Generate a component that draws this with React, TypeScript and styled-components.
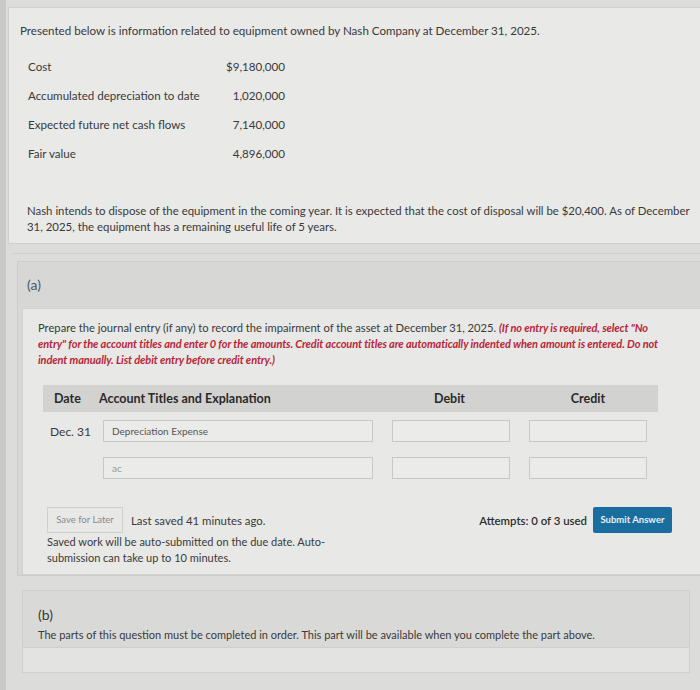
import React from "react";
import styled, { createGlobalStyle } from "styled-components";

const GlobalStyle = createGlobalStyle`
  html, body {
    margin: 0;
    padding: 0;
    background: #dcdcda;
  }
  body {
    font-family: Lato, "Open Sans", "Liberation Sans", sans-serif;
    color: #3a3a3a;
  }
`;

const Page = styled.div`
  width: 700px;
  height: 690px;
  overflow: hidden;
  padding: 7px 0 0 2px;
  box-sizing: border-box;
  border-left: 6px solid #c9c9c7;
`;

const StemBox = styled.div`
  background: #e9e9e7;
  border: 1px solid #d0d0ce;
  border-right: none;
  padding: 15px 0 0 4px;
  height: 237px;
  box-sizing: border-box;
`;

const Intro = styled.p`
  margin: 0 0 0 7px;
  font-size: 11.6px;
  line-height: 16px;
`;

const DataTable = styled.div`
  display: grid;
  grid-template-columns: 190px 67px;
  margin: 20px 0 0 15px;
  row-gap: 13px;
  font-size: 11.6px;
  line-height: 16px;
  white-space: nowrap;
`;

const Value = styled.span`
  text-align: right;
`;

const NashBox = styled.div`
  margin: 41px 0 0 0;
  padding: 0 0 18px 14px;
  border-bottom: 1px solid #cfcfcd;
  font-size: 11.4px;
  line-height: 16px;
`;

const PartSection = styled.section`
  margin: 17px 0 0 9px;
  background: #d7d7d5;
  border: 1px solid #cdcdcb;
  border-right: none;
`;

const PartLabel = styled.div`
  padding: 14px 0 14px 9px;
  font-size: 14px;
  line-height: 18px;
  color: #4b586a;
`;

const PartBody = styled.div`
  margin-left: 4px;
  background: #e8e8e6;
  border: 1px solid #d2d2d0;
  border-right: none;
  padding: 11px 0 14px 15px;
  height: 267px;
  box-sizing: border-box;
`;

const Instructions = styled.p`
  margin: 0;
  width: 634px;
  font-size: 11.2px;
  line-height: 16px;
`;

const Note = styled.em`
  color: #b8263a;
  font-weight: 700;
  font-size: 11px;
  letter-spacing: -0.1px;
`;

const Journal = styled.div`
  margin: 17px 0 0 5px;
  width: 615px;
`;

const HeaderRow = styled.div`
  display: grid;
  grid-template-columns: 56px 282px 137px 140px;
  height: 27px;
  align-items: center;
  background: #d2d2d0;
  font-size: 12.5px;
  font-weight: 700;
  color: #2a2a2a;
  margin-bottom: 8px;
`;

const HeadCell = styled.span<{ $center?: boolean; $flush?: boolean }>`
  padding-left: ${(p) => (p.$center || p.$flush ? "0" : "11px")};
  text-align: ${(p) => (p.$center ? "center" : "left")};
`;

const EntryRow = styled.div`
  display: grid;
  grid-template-columns: 60px 270px 19px 118px 19px 118px;
  align-items: center;
  height: 22px;

  & + & {
    margin-top: 15px;
  }
`;

const DateCell = styled.span`
  font-size: 12px;
  padding-left: 7px;
`;

const Field = styled.div`
  height: 22px;
  box-sizing: border-box;
  border: 1px solid #c8c8c6;
  background: #ebebe9;
  font-size: 10px;
  line-height: 20px;
  padding-left: 8px;
  color: #555;
`;

const Placeholder = styled.span`
  color: #9a9a9a;
`;

const Gap = styled.span``;

const Footer = styled.div`
  display: flex;
  align-items: center;
  margin: 28px 0 0 9px;
  width: 625px;
`;

const SaveButton = styled.div`
  width: 76px;
  height: 26px;
  box-sizing: border-box;
  border: 1px solid #cfcfcd;
  font-size: 9.5px;
  line-height: 24px;
  text-align: center;
  color: #8a8a8a;
`;

const Saved = styled.span`
  margin-left: 8px;
  font-size: 11.4px;
`;

const Attempts = styled.span`
  margin-left: auto;
  font-size: 11.4px;
  font-weight: 600;
  color: #2e2e2e;
`;

const SubmitButton = styled.div`
  margin-left: 6px;
  width: 79px;
  height: 26px;
  border-radius: 2px;
  background: #1a6e9f;
  color: #e8f0f6;
  font-size: 9.5px;
  font-weight: 700;
  line-height: 26px;
  text-align: center;
`;

const AutoNote = styled.p`
  margin: 1px 0 0 9px;
  width: 290px;
  font-size: 11px;
  line-height: 16px;
`;

const PartB = styled.section`
  margin: 14px 10px 0 14px;
  background: #d9d9d7;
  border: 1px solid #cfcfcd;
  padding: 15px 0 6px 15px;
  height: 58px;
  box-sizing: border-box;
`;

const PartBLabel = styled.div`
  font-size: 14px;
  line-height: 18px;
  color: #3a3a3a;
`;

const PartBText = styled.p`
  margin: 3px 0 0;
  font-size: 11px;
  line-height: 16px;
`;

const Strip = styled.div`
  margin: 0 10px 0 14px;
  height: 24px;
  background: #e3e3e1;
  border: 1px solid #d0d0ce;
  border-top: none;
`;

const rows = [
  { date: "Dec. 31", account: "Depreciation Expense", placeholder: false },
  { date: "", account: "ac", placeholder: true },
];

export default function App() {
  return (
    <>
      <GlobalStyle />
      <Page>
        <StemBox>
          <Intro>
            Presented below is information related to equipment owned by Nash
            Company at December 31, 2025.
          </Intro>
          <DataTable>
            <span>Cost</span>
            <Value>$9,180,000</Value>
            <span>Accumulated depreciation to date</span>
            <Value>1,020,000</Value>
            <span>Expected future net cash flows</span>
            <Value>7,140,000</Value>
            <span>Fair value</span>
            <Value>4,896,000</Value>
          </DataTable>
          <NashBox>
            Nash intends to dispose of the equipment in the coming year. It is
            expected that the cost of disposal will be $20,400. As of December
            31, 2025, the equipment has a remaining useful life of 5 years.
          </NashBox>
        </StemBox>

        <PartSection>
          <PartLabel>(a)</PartLabel>
          <PartBody>
            <Instructions>
              Prepare the journal entry (if any) to record the impairment of the
              asset at December 31, 2025.{" "}
              <Note>
                (If no entry is required, select "No entry" for the account
                titles and enter 0 for the amounts. Credit account titles are
                automatically indented when amount is entered. Do not indent
                manually. List debit entry before credit entry.)
              </Note>
            </Instructions>

            <Journal>
              <HeaderRow>
                <HeadCell>Date</HeadCell>
                <HeadCell $flush>Account Titles and Explanation</HeadCell>
                <HeadCell $center>Debit</HeadCell>
                <HeadCell $center>Credit</HeadCell>
              </HeaderRow>
              {rows.map((r, i) => (
                <EntryRow key={i}>
                  <DateCell>{r.date}</DateCell>
                  <Field>
                    {r.placeholder ? (
                      <Placeholder>{r.account}</Placeholder>
                    ) : (
                      r.account
                    )}
                  </Field>
                  <Gap />
                  <Field />
                  <Gap />
                  <Field />
                </EntryRow>
              ))}
            </Journal>

            <Footer>
              <SaveButton>Save for Later</SaveButton>
              <Saved>Last saved 41 minutes ago.</Saved>
              <Attempts>Attempts: 0 of 3 used</Attempts>
              <SubmitButton>Submit Answer</SubmitButton>
            </Footer>
            <AutoNote>
              Saved work will be auto-submitted on the due date. Auto-submission
              can take up to 10 minutes.
            </AutoNote>
          </PartBody>
        </PartSection>

        <PartB>
          <PartBLabel>(b)</PartBLabel>
          <PartBText>
            The parts of this question must be completed in order. This part
            will be available when you complete the part above.
          </PartBText>
        </PartB>
        <Strip />
      </Page>
    </>
  );
}
